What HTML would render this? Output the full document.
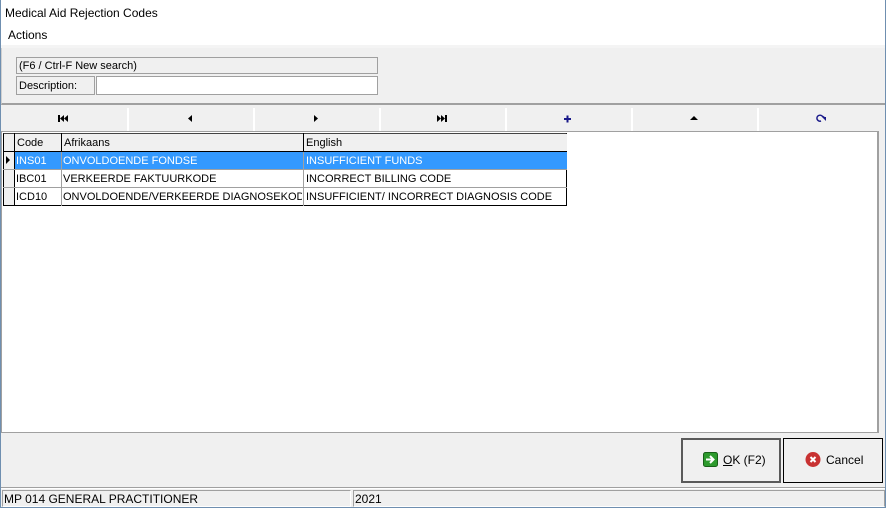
<!DOCTYPE html>
<html><head><meta charset="utf-8"><style>
*{margin:0;padding:0;box-sizing:border-box}
body{width:886px;height:508px;background:#f0f0f0;font-family:"Liberation Sans",Tahoma,sans-serif;font-size:11px;color:#000;position:relative;overflow:hidden}
.a{position:absolute}
.t{white-space:nowrap}
</style></head><body>
<div class="a" style="left:0;top:0;width:886px;height:508px;border:1px solid #6f8fb0;border-top:none"></div>
<div class="a" style="left:1px;top:0;width:884px;height:45px;background:#fff"></div>
<div class="a t" style="left:5px;top:6px;font-size:12px">Medical Aid Rejection Codes</div>
<div class="a t" style="left:8px;top:28px;font-size:12px">Actions</div>
<div class="a" style="left:1px;top:45px;width:884px;height:3px;background:#f4f4f4"></div>
<div class="a" style="left:1px;top:48px;width:884px;height:57px;background:#f0f0f0;border-left:1px solid #d0d0d0;border-bottom:2px solid #a0a0a0"></div>
<div class="a t" style="left:16px;top:57px;width:362px;height:17px;border:1px solid #a0a0a0;padding:2px 2px;font-size:11px">(F6 / Ctrl-F New search)</div>
<div class="a t" style="left:16px;top:76px;width:79px;height:19px;border:1px solid #a0a0a0;padding:3px 2px">Description:</div>
<div class="a" style="left:96px;top:76px;width:282px;height:19px;border:1px solid #a0a0a0;background:#fff"></div>
<!-- nav -->
<div class="a" style="left:2px;top:108px;width:880px;height:23px;background:#f0f0f0"></div>
<div class="a" style="left:127px;top:108px;width:2px;height:23px;background:#fff"></div>
<div class="a" style="left:253px;top:108px;width:2px;height:23px;background:#fff"></div>
<div class="a" style="left:379px;top:108px;width:2px;height:23px;background:#fff"></div>
<div class="a" style="left:505px;top:108px;width:2px;height:23px;background:#fff"></div>
<div class="a" style="left:631px;top:108px;width:2px;height:23px;background:#fff"></div>
<div class="a" style="left:757px;top:108px;width:2px;height:23px;background:#fff"></div>
<svg class="a" style="left:0;top:108px" width="886" height="23">
<g fill="#000">
<rect x="58" y="7" width="2" height="7"/><polygon points="64,7 60,10.5 64,14"/><polygon points="68,7 64,10.5 68,14"/>
<polygon points="192,7 188,10.5 192,14"/>
<polygon points="314,7 318,10.5 314,14"/>
<polygon points="437,7 441,10.5 437,14"/><polygon points="441,7 445,10.5 441,14"/><rect x="445" y="7" width="2" height="7"/>
<polygon points="690,12 694,8 698,12"/>
</g>
<g fill="#1a1a8a"><rect x="564" y="10" width="7" height="2"/><rect x="566.5" y="7.5" width="2" height="7"/></g>
<path d="M821,13 A3,3 0 1 1 822,8 M822,8 L825,10" stroke="#1a1a8a" stroke-width="1.5" fill="none"/>
<polygon points="822,9 826,9 826,13" fill="#1a1a8a"/>
</svg>
<!-- grid -->
<div class="a" style="left:1px;top:131px;width:878px;height:302px;border:1px solid #a0a0a0;border-right:2px solid #a0a0a0;background:#fff"></div>
<div class="a" style="left:3px;top:133px;width:564px;height:73px;border:1px solid #000;border-top:1px solid #444"></div>
<svg class="a" style="left:3px;top:133px" width="565" height="74">
<rect x="1" y="1" width="10" height="71" fill="#f0f0f0"/>
<rect x="11" y="1" width="553" height="17" fill="#f0f0f0"/>
<rect x="11" y="19" width="553" height="17" fill="#3399ff"/>
<g stroke="#000" stroke-width="1">
<line x1="11.5" y1="0" x2="11.5" y2="73"/>
<line x1="0" y1="18.5" x2="564" y2="18.5"/>
</g>
<g stroke="#a0a0a0" stroke-width="1">
<line x1="0" y1="36.5" x2="564" y2="36.5"/><line x1="0" y1="54.5" x2="564" y2="54.5"/>
<line x1="58.5" y1="0" x2="58.5" y2="73"/><line x1="300.5" y1="0" x2="300.5" y2="73"/>
</g>
<g stroke="#000"><line x1="58.5" y1="0" x2="58.5" y2="19"/><line x1="300.5" y1="0" x2="300.5" y2="19"/></g>
<polygon points="3,23 7,27 3,31" fill="#000"/>
</svg>
<div class="a t" style="left:17px;top:137px">Code</div>
<div class="a t" style="left:64px;top:137px">Afrikaans</div>
<div class="a t" style="left:306px;top:137px">English</div>
<div class="a t" style="left:16px;top:155px;color:#fff">INS01</div>
<div class="a t" style="left:63px;top:155px;color:#fff">ONVOLDOENDE FONDSE</div>
<div class="a t" style="left:306px;top:155px;color:#fff">INSUFFICIENT FUNDS</div>
<div class="a t" style="left:16px;top:173px">IBC01</div>
<div class="a t" style="left:63px;top:173px">VERKEERDE FAKTUURKODE</div>
<div class="a t" style="left:306px;top:173px">INCORRECT BILLING CODE</div>
<div class="a t" style="left:16px;top:191px">ICD10</div>
<div class="a t" style="left:63px;top:191px;width:239px;overflow:hidden">ONVOLDOENDE/VERKEERDE DIAGNOSEKODE</div>
<div class="a t" style="left:306px;top:191px">INSUFFICIENT/ INCORRECT DIAGNOSIS CODE</div>
<!-- buttons -->
<div class="a" style="left:681px;top:438px;width:100px;height:45px;border:2px solid #5a5a5a;background:#f0f0f0"></div>
<svg class="a" style="left:703px;top:452px" width="16" height="16"><rect x="0.5" y="0.5" width="14" height="14" rx="2" fill="#2d9a2d" stroke="#186018"/><path d="M3,7.5 H10 M7,4 L10.5,7.5 L7,11" stroke="#fff" stroke-width="2" fill="none"/></svg>
<div class="a t" style="left:723px;top:453px;font-size:12px"><u>O</u>K (F2)</div>
<div class="a" style="left:783px;top:438px;width:100px;height:45px;border:1px solid #000;background:#f0f0f0"></div>
<svg class="a" style="left:805px;top:451px" width="17" height="17"><circle cx="8" cy="8.5" r="7.5" fill="#c83232"/><path d="M5.5,6 L10.5,11 M10.5,6 L5.5,11" stroke="#fff" stroke-width="2"/></svg>
<div class="a t" style="left:826px;top:453px;font-size:12px">Cancel</div>
<!-- status -->
<div class="a" style="left:1px;top:487px;width:884px;height:2px;border-top:1px solid #a0a0a0;border-bottom:1px solid #fff"></div>
<div class="a t" style="left:2px;top:490px;width:349px;height:17px;border:1px solid #a0a0a0;border-right-color:#fff;border-bottom-color:#fff;padding:1px 1px;font-size:12px">MP 014 GENERAL PRACTITIONER</div>
<div class="a t" style="left:353px;top:490px;width:532px;height:17px;border:1px solid #a0a0a0;border-bottom-color:#fff;padding:1px 1px;font-size:12px">2021</div>
</body></html>
